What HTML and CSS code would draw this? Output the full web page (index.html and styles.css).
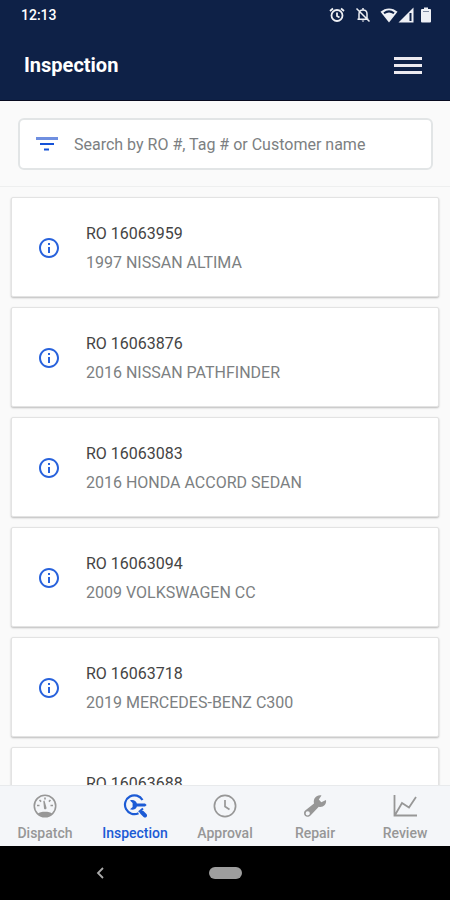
FILE: index.html
```html
<!DOCTYPE html>
<html lang="en">
<head>
<meta charset="utf-8">
<meta name="viewport" content="width=device-width, initial-scale=1">
<title>Inspection</title>
<link rel="stylesheet" href="styles.css">
</head>
<body>
<svg class="defs" aria-hidden="true">
  <symbol id="info" viewBox="0 0 24 24"><path fill="currentColor" d="M11 7h2v2h-2zm0 4h2v6h-2zm1-9C6.480 2 2 6.480 2 12s4.480 10 10 10 10-4.480 10-10S17.520 2 12 2zm0 18c-4.410 0-8-3.590-8-8s3.590-8 8-8 8 3.590 8 8-3.590 8-8 8z"/></symbol>
</svg>
<header class="top">
  <div class="status">
    <span class="clock">12:13</span>
    <div class="status-icons">
      <svg width="16" height="16" viewBox="0 0 16 16" fill="none" stroke="currentColor" stroke-width="1.800"><circle cx="8" cy="8.500" r="5.500"/><path d="M8 5.500v3.500l2.500 1.500M1 4l3-2.500M15 4l-3-2.500"/></svg>
      <svg class="bell" width="16" height="16" viewBox="0 0 16 16"><path fill="none" stroke="currentColor" stroke-width="1.500" d="M4 12V7c0-2.500 1.500-4 4-4s4 1.500 4 4v5M2.500 12.200h11M8 1v2M1.500 1.500l13 13"/><path fill="currentColor" d="M6.500 13.500h3L8 15z"/></svg>
      <svg class="wifi" width="18" height="16" viewBox="0 0 18 16"><path fill="currentColor" d="M9 15.500.5 4.800C5.500.3 12.500.3 17.500 4.800z"/><path fill="none" stroke="#0e2147" stroke-width="2" d="M4 6.200c3-2.200 7-2.200 10 0"/></svg>
      <svg width="16" height="16" viewBox="0 0 16 16"><path fill="currentColor" d="M15.500.5v15H.5z"/><path fill="#0e2147" d="M11.500 6h2v8h-2z"/></svg>
      <svg class="battery" width="12" height="16" viewBox="0 0 12 16"><path fill="currentColor" d="M4 .5h4V2h2q1 0 1 1v11.500q0 1-1 1H2q-1 0-1-1V3q0-1 1-1h2z"/><path fill="#0e2147" opacity=".5" d="M3 4h6v1H3z"/></svg>
    </div>
  </div>
  <div class="appbar">
    <h1>Inspection</h1>
    <button class="menu" type="button" aria-label="Menu"><span></span><span></span><span></span></button>
  </div>
</header>
<div class="search-area">
  <div class="search">
    <button class="filter" type="button" aria-label="Filter"><svg width="22" height="16" viewBox="0 0 22 16"><path fill="#6f8fe0" d="M0 1h22v3H0z"/><path fill="#1552d8" d="M4 7h14v2H4zM8 12.500h5v2H8z"/></svg></button>
    <input type="search" aria-label="Search" placeholder="Search by RO #, Tag # or Customer name">
  </div>
</div>
<main>
  <ul class="orders">
    <li class="card"><svg class="info"><use href="#info"/></svg><div><h2>RO 16063959</h2><p>1997 NISSAN ALTIMA</p></div></li>
    <li class="card"><svg class="info"><use href="#info"/></svg><div><h2>RO 16063876</h2><p>2016 NISSAN PATHFINDER</p></div></li>
    <li class="card"><svg class="info"><use href="#info"/></svg><div><h2>RO 16063083</h2><p>2016 HONDA ACCORD SEDAN</p></div></li>
    <li class="card"><svg class="info"><use href="#info"/></svg><div><h2>RO 16063094</h2><p>2009 VOLKSWAGEN CC</p></div></li>
    <li class="card"><svg class="info"><use href="#info"/></svg><div><h2>RO 16063718</h2><p>2019 MERCEDES-BENZ C300</p></div></li>
    <li class="card"><svg class="info"><use href="#info"/></svg><div><h2>RO 16063688</h2></div></li>
  </ul>
</main>
<nav class="tabs">
  <a href="#dispatch"><svg viewBox="0 0 24 24"><circle cx="12" cy="12" r="10.700" fill="none" stroke="currentColor" stroke-width="1.600"/><path fill="currentColor" d="M5 19.500c2-2.500 12-2.500 14 0-3 4-11 4-14 0zM10.300 7l1.200-.5 2 7.200c.2 1.800-2 2.300-2.500.7z"/><path fill="none" stroke="currentColor" stroke-width="1.600" d="M4 11.500h2.500M17.500 11.500H20M6.500 6l1.600 1.600M17.500 6l-1.600 1.600M12 3.500v2"/></svg>Dispatch</a>
  <a href="#inspection" class="active" aria-current="page"><svg viewBox="0 0 24 24"><path fill="none" stroke="currentColor" stroke-width="2.200" d="M19.500 6A9.400 9.400 0 1 0 15.500 19.200"/><path fill="currentColor" d="M7 6.500c3-1.200 6 .2 6.900 2.900H22l1.700 1.500-1.700 1.500h-8.100c-.9 2.700-3.900 4.100-6.900 2.900l2.600-2.400V8.900z"/><path fill="none" stroke="currentColor" stroke-width="2" d="M20 14.500 15.800 18"/><path fill="none" stroke="currentColor" stroke-width="4" stroke-linecap="round" d="m19 18.500 3 3"/></svg>Inspection</a>
  <a href="#approval"><svg viewBox="0 0 24 24" fill="none" stroke="currentColor" stroke-width="1.700"><circle cx="12" cy="12" r="10.600"/><path d="M12 6v6.500l4.500 3"/></svg>Approval</a>
  <a href="#repair"><svg viewBox="0 0 24 24"><path fill="currentColor" fill-rule="evenodd" d="M18.500 1.500 15.800 5.500l2.500 2.800L23 6c.8 4.500-3 7.800-7.200 6.800l-8.300 8.700C5 24 .7 22.500 1 19c0-1 .5-1.800 1.200-2.400L11 9.500c-1-5 2.500-9 7.500-8zM4.700 17.300a2.100 2.100 0 1 0 .1 4.200 2.100 2.100 0 0 0-.1-4.200z"/></svg>Repair</a>
  <a href="#review"><svg viewBox="0 0 24 24" fill="none" stroke="currentColor" stroke-width="1.800"><path d="M1.500 1v20.500H24M2 21l7-12 7 4.500L23 3"/></svg>Review</a>
</nav>
<footer class="system">
  <button type="button" class="back" aria-label="Back"><svg width="10" height="14" viewBox="0 0 10 14"><path fill="none" stroke="#aaa" stroke-width="1.800" d="M8 2 3 7l5 5"/></svg></button>
  <button type="button" class="home" aria-label="Home"></button>
</footer>
</body>
</html>
```
FILE: styles.css
```css
* { box-sizing: border-box; }
body {
  margin: 0;
  height: 100vh;
  display: flex;
  flex-direction: column;
  background: #fafafa;
  font-family: Roboto, sans-serif;
}
button { border: 0; padding: 0; background: none; }
h1, h2, p { margin: 0; }
svg { display: block; }
.defs { display: none; }
.top {
  background: #0e2147;
  color: #fff;
  border-bottom: 1px solid #080b20;
}
.status {
  display: flex;
  justify-content: space-between;
  align-items: center;
  height: 30px;
  padding: 0 18px 0 21px;
}
.clock { font-size: 14px; font-weight: 500; }
.status-icons { display: flex; align-items: center; color: #eef0f5; }
.bell { margin-left: 10px; }
.wifi { margin-left: 9px; }
.battery { margin-left: 6px; }
.appbar {
  display: flex;
  justify-content: space-between;
  align-items: center;
  height: 70px;
  padding: 0 28px 0 24px;
}
h1 { font-size: 20px; font-weight: 700; }
.menu { display: grid; gap: 4px; width: 28px; }
.menu span { height: 3px; background: #eceaf0; }
.search-area {
  padding: 17px 17px 16px 18px;
  border-bottom: 1px solid #eeefef;
}
.search {
  display: flex;
  align-items: center;
  height: 52px;
  padding-left: 16px;
  gap: 16px;
  background: #fff;
  border: 2px solid #e2e5e6;
  border-radius: 6px;
}
.search input {
  flex: 1;
  min-width: 0;
  border: 0;
  outline: 0;
  padding: 0;
  background: none;
  font: 400 16px Roboto, sans-serif;
}
.search input::placeholder { color: #7c7f82; opacity: 1; }
main { flex: 1; min-height: 0; overflow: hidden; }
.orders {
  list-style: none;
  margin: 0;
  padding: 10px 11px;
  display: grid;
  gap: 10px;
}
.card {
  display: flex;
  align-items: center;
  gap: 25px;
  min-height: 100px;
  padding: 21px 25px 19px;
  background: #fff;
  border: 1px solid #e3e3e3;
  border-radius: 2px;
  box-shadow: 0 1px 2px rgba(0, 0, 0, .25);
}
.card:last-child { align-items: flex-start; }
.info { width: 24px; height: 24px; color: #2862dc; }
.card:last-child .info { margin-top: 17px; }
.card h2, .card p { font-size: 16px; line-height: 29px; font-weight: 400; }
.card h2 { color: #444; }
.card p { color: #7c7f82; }
.tabs {
  display: grid;
  grid-template-columns: repeat(5, 1fr);
  height: 61px;
  padding-top: 8px;
  background: #f4f6f9;
  border-top: 1px solid #e8eaec;
}
.tabs a {
  display: flex;
  flex-direction: column;
  align-items: center;
  gap: 6px;
  color: #979797;
  font-size: 14px;
  line-height: 18px;
  font-weight: 500;
  text-decoration: none;
}
.tabs svg { width: 24px; height: 24px; }
.tabs .active { color: #1c5bd5; }
.system {
  display: grid;
  grid-template-columns: 1fr auto 1fr;
  align-items: center;
  height: 54px;
  background: #000;
}
.back { justify-self: center; margin-right: 8px; }
.home { width: 33px; height: 12px; border-radius: 6px; background: #9e9e9e; }
```
